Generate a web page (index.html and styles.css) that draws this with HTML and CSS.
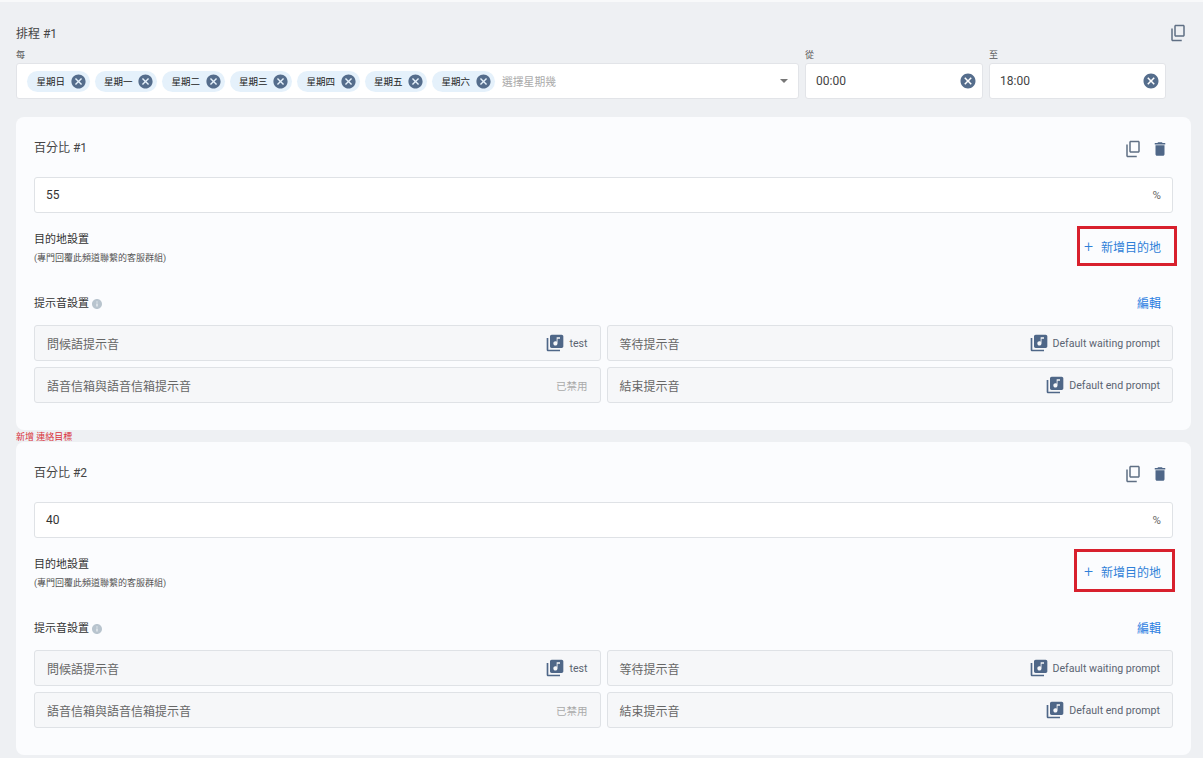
FILE: index.html
```html
<!DOCTYPE html>
<html lang="zh-Hant">
<head>
<meta charset="UTF-8">
<meta name="viewport" content="width=device-width, initial-scale=1.0">
<title>排程</title>
<link rel="stylesheet" href="styles.css">
</head>
<body>
<svg class="sprite" aria-hidden="true">
    <symbol id="i-copy" viewBox="0 0 24 24"><path d="M9 1h10c1.1 0 2 .9 2 2v12c0 1.1-.9 2-2 2H9c-1.1 0-2-.9-2-2V3c0-1.1.9-2 2-2zm0 2v12h10V3H9zM3 6h2v15h12v2H5c-1.1 0-2-.9-2-2V6z"/></symbol>
    <symbol id="i-trash" viewBox="0 0 24 24"><path d="M6 19c0 1.1.9 2 2 2h8c1.1 0 2-.9 2-2V7H6v12zM19 4h-3.5l-1-1h-5l-1 1H5v2h14V4z"/></symbol>
    <symbol id="i-cancel" viewBox="0 0 24 24"><path d="M12 2C6.47 2 2 6.47 2 12s4.47 10 10 10 10-4.47 10-10S17.53 2 12 2zm5 13.59L15.59 17 12 13.41 8.41 17 7 15.59 10.59 12 7 8.41 8.41 7 12 10.59 15.59 7 17 8.41 13.41 12 17 15.59z"/></symbol>
    <symbol id="i-music" viewBox="0 0 24 24"><path d="M20 2H8c-1.1 0-2 .9-2 2v12c0 1.1.9 2 2 2h12c1.1 0 2-.9 2-2V4c0-1.1-.9-2-2-2zm-2 5h-3v5.5c0 1.38-1.12 2.5-2.5 2.5S10 13.88 10 12.5s1.12-2.5 2.5-2.5c.57 0 1.08.19 1.5.51V5h4v2zM4 6H2v14c0 1.1.9 2 2 2h14v-2H4V6z"/></symbol>
    <symbol id="i-info" viewBox="0 0 24 24"><path d="M12 2C6.48 2 2 6.48 2 12s4.48 10 10 10 10-4.48 10-10S17.52 2 12 2zm1 15h-2v-6h2v6zm0-8h-2V7h2v2z"/></symbol>
</svg>

<div class="schedule">
    <div class="schedule-head">
        <span class="title">排程 #1</span>
        <svg class="icon copy"><use href="#i-copy"/></svg>
    </div>

    <div class="schedule-fields">
        <div class="field">
            <label>每</label>
            <div class="control days">
                <span class="chip">星期日<svg class="chip-x"><use href="#i-cancel"/></svg></span>
                <span class="chip">星期一<svg class="chip-x"><use href="#i-cancel"/></svg></span>
                <span class="chip">星期二<svg class="chip-x"><use href="#i-cancel"/></svg></span>
                <span class="chip">星期三<svg class="chip-x"><use href="#i-cancel"/></svg></span>
                <span class="chip">星期四<svg class="chip-x"><use href="#i-cancel"/></svg></span>
                <span class="chip">星期五<svg class="chip-x"><use href="#i-cancel"/></svg></span>
                <span class="chip">星期六<svg class="chip-x"><use href="#i-cancel"/></svg></span>
                <span class="placeholder">選擇星期幾</span>
                <span class="caret"></span>
            </div>
        </div>
        <div class="field">
            <label>從</label>
            <div class="control time">00:00<svg class="time-x"><use href="#i-cancel"/></svg></div>
        </div>
        <div class="field">
            <label>至</label>
            <div class="control time">18:00<svg class="time-x"><use href="#i-cancel"/></svg></div>
        </div>
    </div>
</div>

<div class="card first">
    <div class="card-head">
        <span class="title">百分比 #1</span>
        <div class="card-actions">
            <svg class="icon copy"><use href="#i-copy"/></svg>
            <svg class="icon trash"><use href="#i-trash"/></svg>
        </div>
    </div>
    <div class="percent"><span>55</span><span class="unit">%</span></div>
    <div class="dest">
        <div class="dest-text">
            <div class="section-name">目的地設置</div>
            <div class="section-note">(專門回覆此頻道聯繫的客服群組)</div>
        </div>
        <div class="add-dest">
            <span class="plus">+</span>新增目的地
            <div class="mark"></div>
        </div>
    </div>
    <div class="prompt-head">
        <div class="section-name">提示音設置<svg class="info"><use href="#i-info"/></svg></div>
        <span class="edit">編輯</span>
    </div>
    <div class="prompts">
        <div class="prompt"><span class="prompt-name">問候語提示音</span><span class="prompt-value"><svg class="music"><use href="#i-music"/></svg>test</span></div>
        <div class="prompt"><span class="prompt-name">等待提示音</span><span class="prompt-value"><svg class="music"><use href="#i-music"/></svg>Default waiting prompt</span></div>
        <div class="prompt"><span class="prompt-name">語音信箱與語音信箱提示音</span><span class="prompt-off">已禁用</span></div>
        <div class="prompt"><span class="prompt-name">結束提示音</span><span class="prompt-value"><svg class="music"><use href="#i-music"/></svg>Default end prompt</span></div>
    </div>
</div>

<div class="add-target">新增 連絡目標</div>

<div class="card">
    <div class="card-head">
        <span class="title">百分比 #2</span>
        <div class="card-actions">
            <svg class="icon copy"><use href="#i-copy"/></svg>
            <svg class="icon trash"><use href="#i-trash"/></svg>
        </div>
    </div>
    <div class="percent"><span>40</span><span class="unit">%</span></div>
    <div class="dest">
        <div class="dest-text">
            <div class="section-name">目的地設置</div>
            <div class="section-note">(專門回覆此頻道聯繫的客服群組)</div>
        </div>
        <div class="add-dest">
            <span class="plus">+</span>新增目的地
            <div class="mark mark-second"></div>
        </div>
    </div>
    <div class="prompt-head">
        <div class="section-name">提示音設置<svg class="info"><use href="#i-info"/></svg></div>
        <span class="edit">編輯</span>
    </div>
    <div class="prompts">
        <div class="prompt"><span class="prompt-name">問候語提示音</span><span class="prompt-value"><svg class="music"><use href="#i-music"/></svg>test</span></div>
        <div class="prompt"><span class="prompt-name">等待提示音</span><span class="prompt-value"><svg class="music"><use href="#i-music"/></svg>Default waiting prompt</span></div>
        <div class="prompt"><span class="prompt-name">語音信箱與語音信箱提示音</span><span class="prompt-off">已禁用</span></div>
        <div class="prompt"><span class="prompt-name">結束提示音</span><span class="prompt-value"><svg class="music"><use href="#i-music"/></svg>Default end prompt</span></div>
    </div>
</div>
</body>
</html>
```

FILE: styles.css
```css
body {
    margin: 0;
    height: 758px;
    overflow: hidden;
    background-color: #eef0f3;
    border-top: 2px solid #f8f9fa;
    box-sizing: border-box;
    font-family: Roboto, "Noto Sans CJK TC", sans-serif;
    font-size: 12px;
    color: #444;
}

.sprite {
    display: none;
}

.icon {
    width: 18px;
    height: 18px;
    display: block;
}
.copy {
    fill: #5f6f84;
}
.trash {
    fill: #4f6788;
}

.title {
    font-size: 12px;
    line-height: 20px;
}

/* schedule header */
.schedule-head {
    display: flex;
    justify-content: space-between;
    align-items: center;
    height: 20px;
    padding: 22px 16px 0 16px;
}
.schedule-head .copy {
    margin-bottom: 2px;
}
.schedule-fields {
    display: grid;
    grid-template-columns: 783px 178px 177px;
    gap: 6px;
    padding: 4px 0 0 16px;
}
.field label {
    display: block;
    font-size: 9px;
    line-height: 14px;
    height: 15px;
    color: #555;
}
.control {
    height: 36px;
    box-sizing: border-box;
    display: flex;
    align-items: center;
    background-color: #fff;
    border: 1px solid #e2e4e8;
    border-radius: 3px;
}
.days {
    padding-left: 10px;
    gap: 5px;
}
.chip {
    display: flex;
    align-items: center;
    justify-content: space-between;
    width: 62.5px;
    height: 21px;
    box-sizing: border-box;
    padding: 0 3px 0 9.5px;
    border-radius: 11px;
    background-color: #e5f1fb;
    font-size: 9.5px;
    color: #222;
}
.chip-x {
    width: 17px;
    height: 17px;
    fill: #556d8c;
}
.placeholder {
    margin-left: 2.5px;
    font-size: 10.8px;
    color: #aaa;
}
.caret {
    margin: 0 10px 0 auto;
    border-left: 4px solid transparent;
    border-right: 4px solid transparent;
    border-top: 4px solid #777;
}
.time {
    justify-content: space-between;
    padding: 0 5px 0 10px;
    color: #444;
}
.time-x {
    width: 18px;
    height: 18px;
    fill: #556d8c;
}

/* percent cards */
.card {
    width: 1175px;
    height: 313px;
    margin-left: 16px;
    padding: 0 18px;
    box-sizing: border-box;
    background-color: #fbfcfe;
    border-radius: 8px;
}
.first {
    margin-top: 18px;
}
.card-head {
    display: flex;
    justify-content: space-between;
    align-items: center;
    height: 20px;
    padding: 21px 4px 0 0;
}
.card-actions {
    display: flex;
    gap: 9px;
    margin-top: 2px;
}
.percent {
    display: flex;
    justify-content: space-between;
    align-items: center;
    height: 36px;
    margin-top: 19px;
    padding: 0 11px;
    box-sizing: border-box;
    background-color: #fff;
    border: 1px solid #dfe2e6;
    border-radius: 3px;
    color: #333;
}
.unit {
    font-size: 11.5px;
    color: #666;
}
.dest {
    display: flex;
    justify-content: space-between;
    align-items: center;
    height: 40px;
    margin-top: 13px;
}
.dest-text {
    padding-top: 3px;
}
.section-name {
    display: flex;
    align-items: center;
    font-size: 11px;
    line-height: 18px;
    color: #333;
}
.section-note {
    font-size: 9px;
    line-height: 14px;
    margin-top: 2px;
    color: #555;
}
.add-dest {
    position: relative;
    display: flex;
    align-items: center;
    height: 40px;
    padding: 0 12px 0 9px;
    color: #2f80d8;
}
.plus {
    font-size: 16px;
    font-weight: 300;
    margin-right: 8px;
}
.mark {
    position: absolute;
    top: 0;
    bottom: 0;
    left: 2px;
    right: -4px;
    border: 3px solid #d8202d;
}
.mark-second {
    top: -2px;
    bottom: -1px;
    left: -1px;
    right: -2px;
}
.prompt-head {
    display: flex;
    justify-content: space-between;
    align-items: center;
    height: 20px;
    margin-top: 27px;
    padding-right: 12px;
}
.prompt-head .section-name {
    margin-top: 2px;
}
.info {
    width: 12px;
    height: 12px;
    margin-left: 2px;
    fill: #b8c4ce;
}
.edit {
    margin-bottom: 2px;
    color: #2a7de1;
}
.prompts {
    display: grid;
    grid-template-columns: 1fr 1fr;
    gap: 6px;
    margin-top: 12px;
}
.prompt {
    display: flex;
    justify-content: space-between;
    align-items: center;
    height: 36px;
    padding: 0 12px;
    box-sizing: border-box;
    background-color: #f6f7f9;
    border: 1px solid #dfe2e6;
    border-radius: 3px;
    color: #666;
}
.prompt-name {
    margin-top: 1px;
}
.prompt-value {
    display: flex;
    align-items: center;
    gap: 4px;
    font-size: 10.6px;
    color: #5b6472;
}
.prompt-off {
    font-size: 10.5px;
    color: #aaa;
}
.music {
    width: 20px;
    height: 20px;
    fill: #4f6788;
}

.add-target {
    height: 12px;
    margin-left: 16px;
    font-size: 9px;
    line-height: 14px;
    color: #d8303a;
}
```
